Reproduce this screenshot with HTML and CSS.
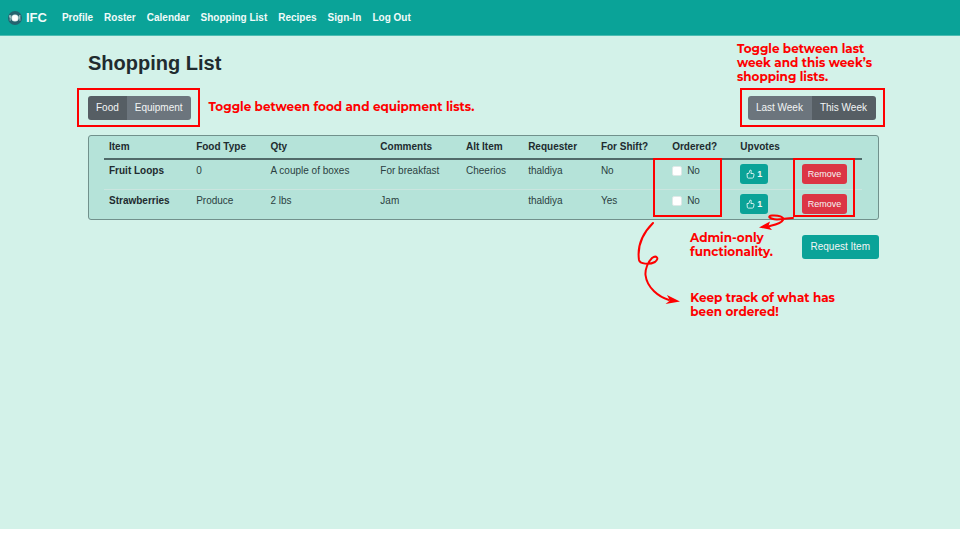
FILE: index.html
```html
<!DOCTYPE html>
<html lang="en">
<head>
<meta charset="utf-8">
<title>IFC - Shopping List</title>
<link rel="stylesheet" href="styles.css">
</head>
<body>
<div class="app">
  <nav class="navbar">
    <a class="brand" href="#">
      <svg class="logo" width="14" height="14" viewBox="0 0 14 14" aria-hidden="true">
        <circle cx="7" cy="7" r="7" fill="#25636f"/>
        <circle cx="7" cy="7" r="3.6" fill="#dceeed"/>
        <circle cx="7" cy="7" r="2.7" fill="#fff"/>
        <path d="M1.600 4.200v1.600q0 .8.6.8t.6-.8V4.200M2.200 4.200v5.600M11.900 9.800V4.200q-.9.8-.7 3h.7" fill="none" stroke="#c5dcdd" stroke-width=".7"/>
      </svg>
      IFC
    </a>
    <a href="#">Profile</a>
    <a href="#">Roster</a>
    <a href="#">Calendar</a>
    <a href="#">Shopping List</a>
    <a href="#">Recipes</a>
    <a href="#">Sign-In</a>
    <a href="#">Log Out</a>
  </nav>

  <main class="content">
    <h1>Shopping List</h1>

    <div class="toolbar">
      <div class="toggle">
        <button class="btn active" type="button">Food</button>
        <button class="btn" type="button">Equipment</button>
        <span class="frame frame-toggle"></span>
      </div>
      <p class="note">Toggle between food and equipment lists.</p>
      <div class="toggle toggle-week">
        <button class="btn" type="button">Last Week</button>
        <button class="btn active" type="button">This Week</button>
        <span class="frame frame-toggle"></span>
        <p class="note note-week">Toggle between last<br>week and this week’s<br>shopping lists.</p>
      </div>
    </div>

    <div class="panel">
      <table>
        <colgroup>
          <col class="c-item"><col class="c-type"><col class="c-qty"><col class="c-comments"><col class="c-alt">
          <col class="c-requester"><col class="c-shift"><col class="c-ordered"><col class="c-upvotes"><col class="c-remove">
        </colgroup>
        <thead>
          <tr>
            <th>Item</th><th>Food Type</th><th>Qty</th><th>Comments</th><th>Alt Item</th>
            <th>Requester</th><th>For Shift?</th><th>Ordered?</th><th>Upvotes</th><th></th>
          </tr>
        </thead>
        <tbody>
          <tr>
            <th scope="row">Fruit Loops</th><td>0</td><td>A couple of boxes</td><td>For breakfast</td><td>Cheerios</td>
            <td>thaldiya</td><td>No</td>
            <td><label class="check"><input type="checkbox">No</label></td>
            <td><button class="btn btn-small btn-vote" type="button"><svg width="9" height="10" viewBox="0 0 9 10" aria-hidden="true"><path d="M1 4.500h1.700L4.200 1q1.500-.2 1 1.800l-.3 1.700h2.300q1 .2.8 1.300l-.5 2.300q-.2 1-1.100 1H2.200q-.7 0-.9-.8L1 4.500z" fill="none" stroke="#fff" stroke-width=".8" stroke-linejoin="round"/></svg>1</button></td>
            <td><button class="btn btn-small btn-remove" type="button">Remove</button></td>
          </tr>
          <tr>
            <th scope="row">Strawberries</th><td>Produce</td><td>2 lbs</td><td>Jam</td><td></td>
            <td>thaldiya</td><td>Yes</td>
            <td><label class="check"><input type="checkbox">No</label></td>
            <td><button class="btn btn-small btn-vote" type="button"><svg width="9" height="10" viewBox="0 0 9 10" aria-hidden="true"><path d="M1 4.500h1.700L4.200 1q1.500-.2 1 1.800l-.3 1.700h2.300q1 .2.8 1.300l-.5 2.300q-.2 1-1.100 1H2.200q-.7 0-.9-.8L1 4.500z" fill="none" stroke="#fff" stroke-width=".8" stroke-linejoin="round"/></svg>1</button></td>
            <td><button class="btn btn-small btn-remove" type="button">Remove</button></td>
          </tr>
        </tbody>
      </table>
      <span class="frame frame-ordered"></span>
      <span class="frame frame-remove"></span>
      <svg class="arrows" width="180" height="100" viewBox="630 210 180 100" aria-hidden="true">
        <g fill="none" stroke="#fe0000" stroke-width="2" stroke-linecap="round">
          <path d="M653 223C643 233 637 246 639 260C640 264 649 265 655 262C660 258 656 255 652 258C648 262 645 269 645.500 275C647 288 659 297 669 300"/>
          <path d="M793 218C787 218 782 219.500 777 219.500C769 219 767 216 772 215.500C779 215 784 217 783 220C781 224 774 225 768 226.500"/>
        </g>
        <path d="M680 301.500L665.500 304L670 300.500L667 295zM759 227.500L770 221.500L768.500 226L772 230z" fill="#fe0000"/>
      </svg>
      <p class="note note-admin">Admin-only<br>functionality.</p>
      <p class="note note-track">Keep track of what has<br>been ordered!</p>
    </div>

    <div class="actions">
      <button class="btn btn-request" type="button">Request Item</button>
    </div>
  </main>
</div>
</body>
</html>
```
FILE: styles.css
```css
* {
  box-sizing: border-box;
}

body {
  margin: 0;
  background: #fff;
  color: #212b2f;
  font: 10px/14px "Liberation Sans", Arial, sans-serif;
}

.app {
  min-height: calc(100vh - 11px);
  background: #d3f2e9;
}

.navbar {
  display: flex;
  align-items: center;
  gap: 11px;
  height: 36px;
  padding: 0 8px;
  background: #0aa398;
  border-bottom: 1px solid #4cbdb2;
}

.navbar a {
  color: #f1fbfa;
  font-weight: bold;
  text-decoration: none;
}

.navbar .brand {
  display: flex;
  align-items: center;
  gap: 4px;
  margin-right: 4px;
  font-size: 13px;
}

.content {
  padding: 14px 81px 0 88px;
}

h1 {
  margin: 0;
  font-size: 20px;
  line-height: 26px;
}

.toolbar {
  display: flex;
  align-items: center;
  margin-top: 20px;
  padding-right: 3px;
}

.toggle {
  position: relative;
  display: flex;
}

.toggle-week {
  margin-left: auto;
}

.toolbar > .note {
  margin: 0 0 2px 18px;
}

.btn {
  height: 24px;
  padding: 0 8px;
  border: 0;
  border-radius: 3px;
  background: #6c757d;
  color: #f3f5f5;
  font: inherit;
}

.toggle .btn:nth-child(1) {
  border-radius: 3px 0 0 3px;
}

.toggle .btn:nth-child(2) {
  border-radius: 0 3px 3px 0;
}

.toggle-week .btn {
  padding-right: 9px;
}

.btn.active {
  background: #565e64;
}

.frame {
  position: absolute;
  border: 2px solid #fe0000;
  pointer-events: none;
}

.frame-toggle {
  inset: -8px -9px -7px -11px;
}

.toggle-week .frame-toggle {
  left: -8px;
}

.note {
  margin: 0;
  color: #fe0000;
  font: 700 12px/14px Montserrat, Inter, sans-serif;
  white-space: nowrap;
}

.note-week {
  position: absolute;
  left: -11px;
  bottom: 36px;
}

.panel {
  position: relative;
  margin-top: 15px;
  padding: 0 16px 0 15px;
  border: 1px solid #71918c;
  border-radius: 3px;
  background: #b5e3d9;
}

table {
  width: 100%;
  border-collapse: collapse;
  table-layout: fixed;
}

th,
td {
  padding: 4px 0 4px 5px;
  text-align: left;
  vertical-align: top;
  white-space: nowrap;
}

tbody th,
tbody td {
  padding-bottom: 5px;
}

td {
  color: #2b3f41;
}

thead th {
  border-bottom: 2px solid #506a69;
}

tbody tr + tr > * {
  border-top: 1px solid #cbe5df;
}

.c-item { width: 11.5%; }
.c-type { width: 9.8%; }
.c-qty { width: 14.5%; }
.c-comments { width: 11.3%; }
.c-alt { width: 8.2%; }
.c-requester { width: 9.6%; }
.c-shift { width: 9.4%; }
.c-ordered { width: 9%; }
.c-upvotes { width: 8.1%; }
.c-remove { width: 8.6%; }

.check {
  display: flex;
  align-items: center;
  gap: 5px;
}

.check input {
  appearance: none;
  width: 10px;
  height: 10px;
  margin: 0;
  border: 1px solid #dfe9e7;
  border-radius: 2px;
  background: #fff;
}

.btn-small {
  display: flex;
  align-items: center;
  gap: 2px;
  height: 20px;
  padding: 0 6px;
  font-size: 9px;
}

.btn-vote,
.btn-request {
  background: #0aa398;
}

.btn-vote {
  font-weight: bold;
}

.btn-remove {
  background: #dc3545;
}

.btn-request {
  padding: 0 9px;
}

.frame-ordered {
  top: 22px;
  right: 156px;
  width: 69px;
  height: 59px;
}

.frame-remove {
  top: 22px;
  right: 23px;
  width: 62px;
  height: 59px;
}

.arrows {
  position: absolute;
  top: 74px;
  right: 68px;
}

.note-admin {
  position: absolute;
  top: 95px;
  right: 105px;
}

.note-track {
  position: absolute;
  top: 155px;
  right: 43px;
}

.actions {
  display: flex;
  justify-content: flex-end;
  margin-top: 15px;
}
```
